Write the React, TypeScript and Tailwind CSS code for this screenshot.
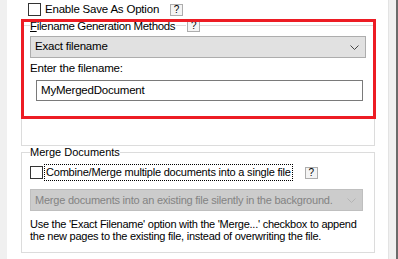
import React from "react";

const ui = { fontFamily: "'Liberation Sans', Arial, sans-serif" };

function HelpButton() {
    return (
        <span className="flex h-[12px] w-[13px] shrink-0 items-center justify-center border border-[#adadad] bg-[#f4f4f4] text-[10px] leading-none tracking-normal text-black">
            ?
        </span>
    );
}

function Chevron({ color }: { color: string }) {
    return (
        <svg width="9" height="5" viewBox="0 0 9 5" className="shrink-0">
            <polyline points="0.5,0.5 4.5,4.5 8.5,0.5" fill="none" stroke={color} strokeWidth="1" />
        </svg>
    );
}

export default function App() {
    return (
        <div className="flex h-[259px] w-[398px] overflow-hidden bg-white text-black" style={ui}>
            {/* left strip */}
            <div className="w-[7px] shrink-0 bg-[#f0f0f0]" />

            {/* panel */}
            <div className="relative w-[381px] shrink-0 bg-white pl-[14px] pr-[13px]">
                {/* Enable Save As Option */}
                <div className="mt-[3px] flex h-[13px] items-center pl-[7px] text-[11.5px] tracking-[-0.2px]">
                    <span className="h-[13px] w-[13px] border border-[#333333] bg-white" />
                    <span className="ml-[4px] leading-none">Enable Save As Option</span>
                    <span className="ml-[11px]">
                        <HelpButton />
                    </span>
                </div>

                {/* Filename Generation Methods */}
                <fieldset className="mt-[2px] border border-[#dcdcdc] px-[8px] pb-[44px] text-[11.5px] tracking-[-0.2px]">
                    <legend className="flex h-[14px] items-center">
                        <span className="whitespace-nowrap pt-[3px] leading-none tracking-[-0.35px]">
                            <span className="underline">F</span>ilename Generation Methods
                        </span>
                        <span className="mx-px h-px w-[10px] bg-[#dcdcdc]" />
                        <span className="pt-[2px]">
                            <HelpButton />
                        </span>
                    </legend>
                    <div className="mt-[4px] flex h-[22px] w-[336px] items-center justify-between border border-[#adadad] bg-[#e1e1e1] pl-[4px] pr-[6px]">
                        <span>Exact filename</span>
                        <Chevron color="#444444" />
                    </div>
                    <div className="mt-[2px] h-[16px] leading-[16px]">Enter the filename:</div>
                    <div className="ml-[6px] mt-[4px] flex h-[21px] w-[327px] items-center border border-[#7a7a7a] bg-white pl-[4px]">
                        MyMergedDocument
                    </div>
                </fieldset>

                {/* Merge Documents */}
                <fieldset className="border border-[#dcdcdc] px-[8px] pb-[10px] text-[11px]">
                    <legend className="h-[12px] leading-[12px]">Merge Documents</legend>
                    <div className="mt-[6px] flex h-[17px] items-center tracking-[-0.2px]">
                        <span className="h-[13px] w-[13px] border border-[#333333] bg-white" />
                        <span className="ml-[1px] whitespace-nowrap border border-dotted border-black px-[1px] leading-[15px]">
                            Combine/Merge multiple documents into a single file
                        </span>
                        <span className="ml-[12px]">
                            <HelpButton />
                        </span>
                    </div>
                    <div className="mt-[8px] flex h-[22px] w-[333px] items-center justify-between border border-[#bfbfbf] bg-[#cccccc] pl-[4px] pr-[6px] tracking-[-0.22px] text-[#838383]">
                        <span className="whitespace-nowrap">Merge documents into an existing file silently in the background.</span>
                        <Chevron color="#b4b4b4" />
                    </div>
                    <p className="mt-[7px] whitespace-nowrap leading-[12px] tracking-[-0.25px]">
                        Use the 'Exact Filename' option with the 'Merge...' checkbox to append
                        <br />
                        the new pages to the existing file, instead of overwriting the file.
                    </p>
                </fieldset>

                {/* highlight */}
                <div className="pointer-events-none absolute left-[14px] top-[19px] h-[100px] w-[355px] border-[3px] border-[#ed1c24]" />
            </div>

            {/* right strip */}
            <div className="w-[8px] shrink-0 border-l border-[#e3e3e3] bg-[#f0f0f0]" />
            <div className="w-[2px] shrink-0 bg-[#6b6b6b]" />
        </div>
    );
}
